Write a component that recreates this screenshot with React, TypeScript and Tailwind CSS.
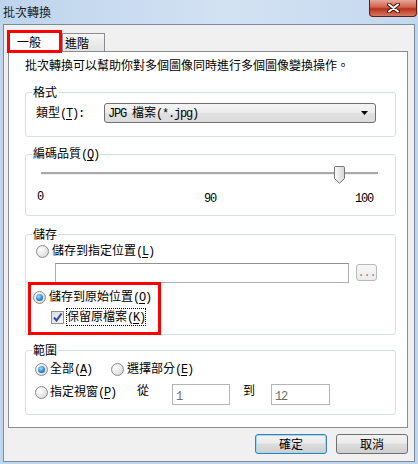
import React from 'react';

const A = ({ children }: { children: React.ReactNode }) => (
  <span className="font-['Liberation_Mono',monospace] tracking-[-1.2px]">{children}</span>
);

// label with mnemonic letter in parentheses, e.g. 類型(T)
const Lbl = ({ text, k, tail }: { text: string; k: string; tail?: string }) => (
  <span className="whitespace-nowrap">
    {text}
    <A>
      (<span className="underline underline-offset-[2px]">{k}</span>){tail}
    </A>
  </span>
);

const Radio = ({ checked }: { checked?: boolean }) => (
  <span className="flex h-[13px] w-[13px] shrink-0 items-center justify-center rounded-full border border-[#8b8b8b] bg-[radial-gradient(circle_at_35%_35%,#ffffff,#e4e4e4_60%,#c9c9c9)]">
    {checked && (
      <span className="h-[7px] w-[7px] rounded-full bg-[radial-gradient(circle_at_40%_35%,#a9dcff,#2a8ad4_55%,#1b4f7f)]" />
    )}
  </span>
);

const Check = () => (
  <span className="flex h-[13px] w-[13px] shrink-0 items-center justify-center border border-[#8f8f8f] bg-[linear-gradient(135deg,#dcdcdc,#f8f8f8)]">
    <svg width="11" height="11" viewBox="0 0 11 11">
      <path d="M2 5.5 L4.5 8.5 L9.5 1.5" fill="none" stroke="#2e47a0" strokeWidth="2" />
    </svg>
  </span>
);

const Group = ({ title, className, children }: { title: React.ReactNode; className?: string; children: React.ReactNode }) => (
  <fieldset className={`ml-[16px] mr-[11px] rounded-[3px] border border-[#d5dfe5] ${className ?? ''}`}>
    <legend className="ml-[6px] px-[1px] leading-[16px]">{title}</legend>
    {children}
  </fieldset>
);

const Button = ({ label, focus }: { label: string; focus?: boolean }) => (
  <div
    className={`flex h-[20px] w-[72px] items-center justify-center rounded-[3px] border bg-[linear-gradient(#f2f2f2,#ebebeb_45%,#dddddd_50%,#cfcfcf)] ${
      focus ? 'border-[#3c7fb1] shadow-[inset_0_0_0_1px_#9fd8f5]' : 'border-[#707070]'
    }`}
  >
    {label}
  </div>
);

export default function App() {
  return (
    <div className="flex h-[464px] w-[418px] flex-col overflow-hidden bg-[#c0d6ee] font-['Noto_Sans_CJK_TC',sans-serif] text-[12px] leading-[16px] text-black">
      {/* title bar */}
      <div className="relative flex h-[24px] items-center bg-[linear-gradient(90deg,#bed4ed,#d3e2f3_55%,#c3d8ee)] pl-[3px]">
        <span className="text-[#1a1a1a]">批次轉換</span>
        <div className="absolute right-[1px] top-0 flex h-[17px] w-[48px] items-center justify-center rounded-b-[4px] border border-t-0 border-[#5a1d17] bg-[linear-gradient(#e8a898,#d0604a_45%,#b8321c_55%,#d87a5e)]">
          <svg width="13" height="10" viewBox="0 0 13 10">
            <path d="M2 1.5 L11 8.5 M11 1.5 L2 8.5" stroke="#4a140c" strokeWidth="4" strokeLinecap="round" />
            <path d="M2 1.5 L11 8.5 M11 1.5 L2 8.5" stroke="#ffffff" strokeWidth="2" strokeLinecap="round" />
          </svg>
        </div>
      </div>

      {/* client */}
      <div className="mx-[3px] flex h-[438px] flex-col border border-[#7d8a99] bg-[#f0f0f0]">
        {/* tabs */}
        <div className="flex h-[26px] items-end pl-[3px]">
          <div className="relative z-10 -mb-[2px] flex h-[23px] w-[55px] items-center border-[3px] border-[#ff0000] bg-white pl-[7px]">
            一般
          </div>
          <div className="flex h-[18px] w-[43px] items-center border border-b-0 border-[#898c95] bg-[linear-gradient(#f6f6f6,#e2e2e2)] pl-[2px]">
            進階
          </div>
        </div>

        {/* panel */}
        <div className="ml-[4px] flex h-[377px] w-[400px] flex-col border border-[#898c95] bg-white">
          <div className="pl-[16px] pt-[5px]">批次轉換可以幫助你對多個圖像同時進行多個圖像變換操作。</div>

          <Group title="格式" className="mt-[11px] pb-[13px]">
            <div className="mt-[3px] flex h-[20px] items-center pl-[10px]">
              <div className="w-[68px]">
                <Lbl text="類型" k="T" tail=":" />
              </div>
              <div className="flex h-[20px] w-[272px] items-center justify-between rounded-[3px] border border-[#707070] bg-[linear-gradient(#f4f4f4,#ececec_50%,#e0e0e0_50%,#dcdcdc)] pl-[3px] pr-[7px]">
                <span>
                  <A>JPG </A>檔案<A>(*.jpg)</A>
                </span>
                <svg width="7" height="4" viewBox="0 0 7 4">
                  <path d="M0 0 H7 L3.5 4 Z" fill="#000" />
                </svg>
              </div>
            </div>
          </Group>

          <Group title={<Lbl text="編碼品質" k="Q" />} className="mt-[8px] pb-[10px]">
            <div className="relative ml-[15px] mr-[17px] h-[22px]">
              <div className="absolute left-0 right-0 top-[9px] h-[3px] border-b border-[#ececec] bg-[#a9a9a9]" />
              <svg className="absolute left-[293px] top-[3px]" width="11" height="18" viewBox="0 0 11 18">
                <defs>
                  <linearGradient id="th" x1="0" x2="1" y1="0" y2="0">
                    <stop offset="0" stopColor="#fbfbfb" />
                    <stop offset="1" stopColor="#d6d6d6" />
                  </linearGradient>
                </defs>
                <path
                  d="M1.8 0.5 H9.2 Q10.5 0.5 10.5 1.8 V12.5 L5.5 17.3 L0.5 12.5 V1.8 Q0.5 0.5 1.8 0.5 Z"
                  fill="url(#th)"
                  stroke="#767676"
                />
              </svg>
            </div>
            <div className="mt-[4px] flex h-[16px] pl-[11px] pr-[22px]">
              <A>0</A>
              <span className="ml-[161px]">
                <A>90</A>
              </span>
              <span className="ml-auto">
                <A>100</A>
              </span>
            </div>
          </Group>

          <Group title="儲存" className="mt-[10px]">
            <div className="mt-[1px] flex h-[16px] items-center gap-[3px] pl-[10px]">
              <Radio />
              <Lbl text="儲存到指定位置" k="L" />
            </div>
            <div className="mt-[4px] flex items-start">
              <div className="ml-[29px] h-[20px] w-[294px] border border-[#abadb3] border-t-[#8e8f8f] bg-white" />
              <div className="ml-[7px] mt-[1px] flex h-[17px] w-[21px] items-center justify-center rounded-[3px] border border-[#b5b9bc] bg-[linear-gradient(#f6f6f6,#ececec)] text-[#8a8a8a]">
                <A>...</A>
              </div>
            </div>
            <div className="relative z-10 -mb-[1px] ml-[2px] mt-[-1px] h-[53px] w-[133px] border-[3px] border-[#ff0000] bg-white">
              <div className="mt-[4px] flex h-[16px] items-center gap-[3px] pl-[2px]">
                <Radio checked />
                <Lbl text="儲存到原始位置" k="O" />
              </div>
              <div className="mt-[4px] flex h-[16px] items-center gap-[2px] pl-[20px]">
                <Check />
                <span className="border border-dotted border-black leading-[14px]">
                  <Lbl text="保留原檔案" k="K" />
                </span>
              </div>
            </div>
          </Group>

          <Group title="範圍" className="mt-[7px] pb-[9px]">
            <div className="mt-[3px] flex h-[16px] items-center pl-[9px]">
              <div className="flex w-[76px] items-center gap-[2px]">
                <Radio checked />
                <Lbl text="全部" k="A" />
              </div>
              <div className="flex items-center gap-[3px]">
                <Radio />
                <Lbl text="選擇部分" k="E" />
              </div>
            </div>
            <div className="mt-[7px] flex h-[21px] items-start pl-[9px]">
              <div className="-mt-[1px] flex w-[102px] items-center gap-[2px]">
                <Radio />
                <Lbl text="指定視窗" k="P" />
              </div>
              <span className="-mt-[2px] w-[35px]">從</span>
              <div className="h-[21px] w-[58px] border border-[#b5b5b5] bg-white pl-[3px] pt-[2px] text-[#6d6d6d]">
                <A>1</A>
              </div>
              <span className="-mt-[2px] ml-[13px] w-[28px]">到</span>
              <div className="h-[21px] w-[59px] border border-[#b5b5b5] bg-white pl-[3px] pt-[2px] text-[#6d6d6d]">
                <A>12</A>
              </div>
            </div>
          </Group>
        </div>

        {/* buttons */}
        <div className="mt-[6px] flex justify-end gap-[9px] pr-[6px]">
          <Button label="確定" focus />
          <Button label="取消" />
        </div>
      </div>
    </div>
  );
}
